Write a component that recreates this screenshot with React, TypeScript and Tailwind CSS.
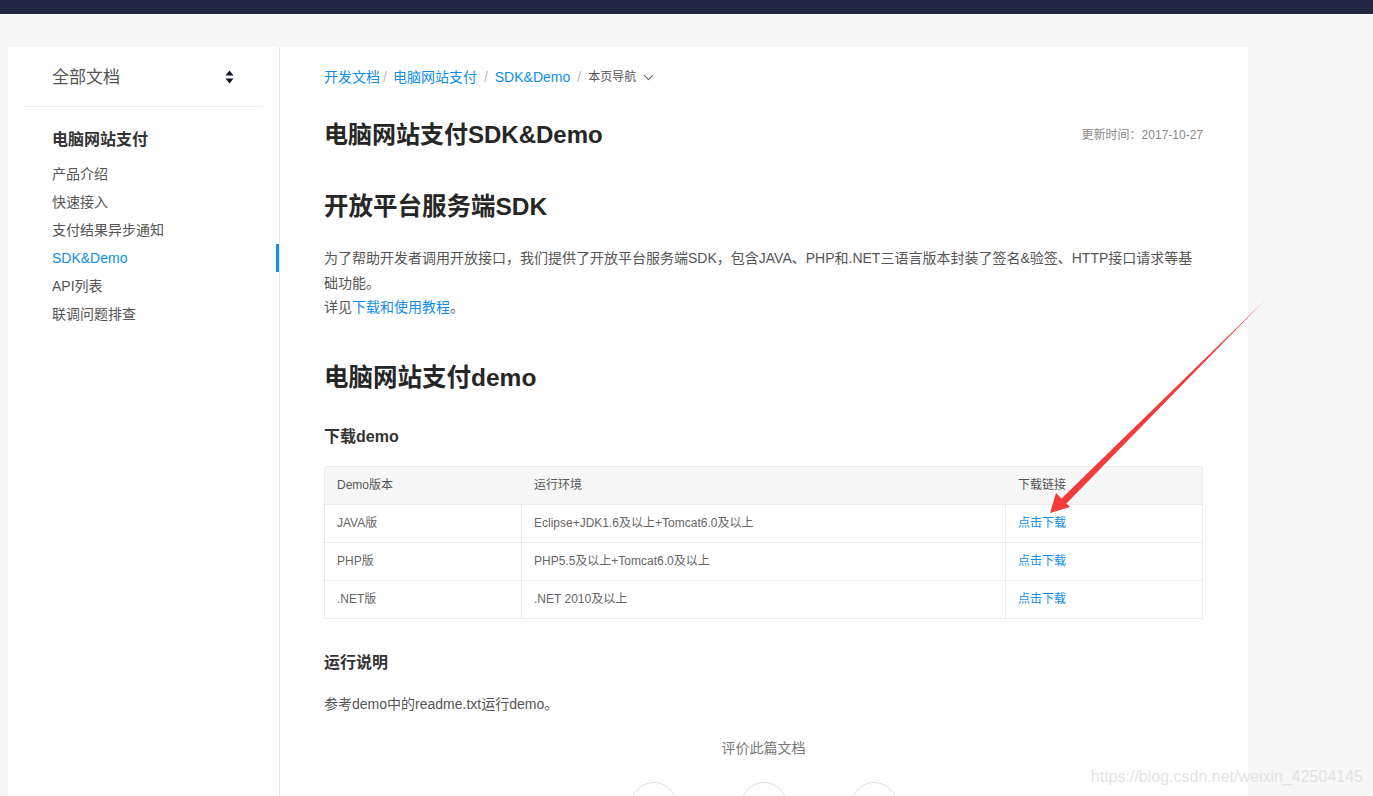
import { ChevronDown } from 'lucide-react'

const font = { fontFamily: '"Liberation Sans", "Noto Sans CJK SC", sans-serif' }

const navItems = ['产品介绍', '快速接入', '支付结果异步通知', 'SDK&Demo', 'API列表', '联调问题排查']

const rows = [
  { ver: 'JAVA版', env: 'Eclipse+JDK1.6及以上+Tomcat6.0及以上' },
  { ver: 'PHP版', env: 'PHP5.5及以上+Tomcat6.0及以上' },
  { ver: '.NET版', env: '.NET 2010及以上' },
]

function SortIcon() {
  return (
    <svg width="9" height="14" viewBox="0 0 9 14" className="text-[#0d1326]">
      <path d="M4.5 0.5 L8.5 5.5 L0.5 5.5 Z" fill="currentColor" />
      <path d="M4.5 13.5 L8.5 8.5 L0.5 8.5 Z" fill="currentColor" />
    </svg>
  )
}

function Sidebar() {
  return (
    <aside className="w-[272px] shrink-0 border-r border-[#e9e9e9]">
      <div className="mx-4 flex h-[60px] items-center justify-between border-b border-[#eeeeee] pl-7 pr-[29px]">
        <span className="pt-[2px] text-[17px] text-[#555]">全部文档</span>
        <SortIcon />
      </div>
      <div className="mt-[21px] pl-11 text-[16px] font-bold leading-6 text-[#333]">电脑网站支付</div>
      <ul className="mt-2">
        {navItems.map((it) => {
          const active = it === 'SDK&Demo'
          return (
            <li
              key={it}
              className={`relative pl-11 text-[14px] leading-[28px] ${active ? 'text-[#108ee9]' : 'text-[#555]'}`}
            >
              {it}
              {active && <span className="absolute right-0 top-0 h-full w-[3px] bg-[#108ee9]" />}
            </li>
          )
        })}
      </ul>
    </aside>
  )
}

function DemoTable() {
  return (
    <div className="mt-[17px] overflow-hidden rounded-t-[3px] border border-[#ececec] text-[12px]">
      <div className="grid h-[37px] grid-cols-[197px_484px_1fr] items-center bg-[#f7f7f7] text-[#555]">
        <div className="pl-3">Demo版本</div>
        <div className="pl-3">运行环境</div>
        <div className="pl-3">下载链接</div>
      </div>
      {rows.map((r) => (
        <div
          key={r.ver}
          className="grid h-[38px] grid-cols-[197px_484px_1fr] border-t border-[#ececec] text-[#666]"
        >
          <div className="flex items-center border-r border-[#ececec] pl-3">{r.ver}</div>
          <div className="flex items-center border-r border-[#ececec] pl-3">{r.env}</div>
          <div className="flex items-center pl-3 text-[#108ee9]">点击下载</div>
        </div>
      ))}
    </div>
  )
}

function Content() {
  return (
    <main className="flex-1 pl-[44px] pr-[45px] pt-5">
      <div className="flex h-5 items-center text-[14px] leading-5">
        <span className="text-[#108ee9]">开发文档</span>
        <span className="mx-[3px] text-[#bbb]">/</span>
        <span className="ml-[3px] text-[#108ee9]">电脑网站支付</span>
        <span className="mx-[7px] text-[#bbb]">/</span>
        <span className="text-[#108ee9]">SDK&amp;Demo</span>
        <span className="mx-[7px] text-[#bbb]">/</span>
        <span className="text-[12px] text-[#555]">本页导航</span>
        <ChevronDown size={17} strokeWidth={1.6} className="ml-[4px] text-[#666]" />
      </div>

      <div className="mt-8 flex items-center justify-between">
        <h1 className="text-[24px] font-bold leading-8 text-[#262626]">电脑网站支付SDK&amp;Demo</h1>
        <span className="text-[12px] text-[#888]">更新时间：2017-10-27</span>
      </div>

      <h2 className="mt-[38px] text-[24.5px] font-bold leading-9 text-[#262626]">开放平台服务端SDK</h2>
      <div className="mt-[21px] text-[14px] leading-[24.5px] text-[#555]">
        <p>
          为了帮助开发者调用开放接口，我们提供了开放平台服务端SDK，包含JAVA、PHP和.NET三语言版本封装了签名&amp;验签、HTTP接口请求等基础功能。
        </p>
        <p>
          详见<span className="text-[#108ee9]">下载和使用教程</span>。
        </p>
      </div>

      <h2 className="mt-10 text-[24.5px] font-bold leading-9 text-[#262626]">电脑网站支付demo</h2>
      <h3 className="mt-[29px] text-[16px] font-bold leading-6 text-[#333]">下载demo</h3>
      <DemoTable />

      <h3 className="mt-8 text-[16px] font-bold leading-6 text-[#333]">运行说明</h3>
      <p className="mt-[17px] text-[14px] leading-6 text-[#555]">参考demo中的readme.txt运行demo。</p>

      <div className="mt-[22px] text-center text-[14px] leading-5 text-[#777]">评价此篇文档</div>
      <div className="mt-6 flex justify-center gap-16 pb-10">
        <div className="h-[46px] w-[46px] rounded-full border border-[#ddd]" />
        <div className="h-[46px] w-[46px] rounded-full border border-[#ddd]" />
        <div className="h-[46px] w-[46px] rounded-full border border-[#ddd]" />
      </div>
    </main>
  )
}

function Arrow() {
  return (
    <svg className="pointer-events-none absolute left-0 top-0" width="1373" height="796">
      <polygon points="1265.4,299.6 1264.6,300.4 1059,501 1064,506" fill="#f23c3c" />
      <polygon points="1050,513 1056,493 1070,507" fill="#f23c3c" />
    </svg>
  )
}

export default function App() {
  return (
    <div className="relative h-[796px] overflow-hidden bg-[#f7f7f7]" style={font}>
      <div className="h-[14px] bg-[#232643]" />
      <div className="ml-2 mt-[33px] flex min-h-[760px] w-[1240px] bg-white">
        <Sidebar />
        <Content />
      </div>
      <Arrow />
      <div className="absolute bottom-[7px] right-[10px] text-[16px] text-[#e0e0e0]/90">
        https://blog.csdn.net/weixin_42504145
      </div>
    </div>
  )
}
